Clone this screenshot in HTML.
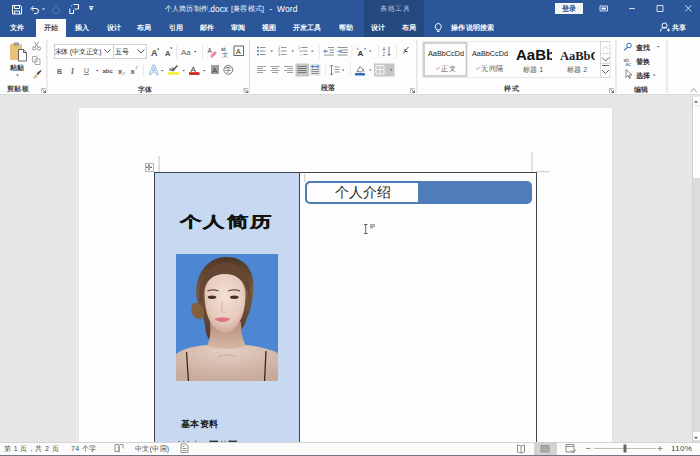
<!DOCTYPE html>
<html><head><meta charset="utf-8">
<style>
*{margin:0;padding:0;box-sizing:border-box}
html,body{width:700px;height:456px;overflow:hidden;background:#e6e6e6}
body{position:relative;font-family:"Liberation Sans",sans-serif;color:#444}
.a{position:absolute}
.t{position:absolute;white-space:nowrap;font-size:7px;letter-spacing:0.25px;line-height:8px;font-weight:bold;margin-top:0.8px}
.w{color:#fff}
.n{font-weight:normal}
svg{position:absolute;left:0;top:0}
</style></head><body>
<!-- title + tabs -->
<div class="a" style="left:0;top:0;width:700px;height:37px;background:#2b579a"></div>
<div class="a" style="left:364px;top:0;width:60px;height:37px;background:#24497f"></div>
<div class="a" style="left:36px;top:19px;width:30px;height:19px;background:#fdfdfd"></div>
<div class="t w n" style="left:164.5px;top:4.6px;font-size:7px;letter-spacing:0.25px">个人简历制作</div>
<div class="t w n" style="left:208px;top:4.2px;font-size:8.4px;letter-spacing:0">.docx</div>
<div class="t w n" style="left:231px;top:4.6px;font-size:7px;letter-spacing:0.2px">[兼容模式]</div>
<div class="t w n" style="left:269.5px;top:4.2px;font-size:8.3px">-</div>
<div class="t w n" style="left:277px;top:4.2px;font-size:8.4px;letter-spacing:0.2px">Word</div>
<div class="t" style="left:380px;top:4.6px;color:#b4c4dc;font-weight:normal;letter-spacing:0.5px">表格工具</div>
<div class="a" style="left:555px;top:3px;width:28px;height:11px;background:#f4f4f4"></div>
<div class="t" style="left:562px;top:4.6px;color:#2b579a">登录</div>
<div class="t w" style="left:10px;top:23.7px">文件</div>
<div class="t" style="left:44px;top:23.7px;color:#444">开始</div>
<div class="t w" style="left:74.5px;top:23.7px">插入</div>
<div class="t w" style="left:106.5px;top:23.7px">设计</div>
<div class="t w" style="left:137px;top:23.7px">布局</div>
<div class="t w" style="left:168.5px;top:23.7px">引用</div>
<div class="t w" style="left:200px;top:23.7px">邮件</div>
<div class="t w" style="left:231px;top:23.7px">审阅</div>
<div class="t w" style="left:262px;top:23.7px">视图</div>
<div class="t w" style="left:292.5px;top:23.7px">开发工具</div>
<div class="t w" style="left:339px;top:23.7px">帮助</div>
<div class="t w" style="left:371px;top:23.7px">设计</div>
<div class="t w" style="left:402px;top:23.7px">布局</div>
<div class="t w" style="left:451px;top:23.7px">操作说明搜索</div>
<div class="t w" style="left:672px;top:23.4px">共享</div>

<!-- ribbon -->
<div class="a" style="left:0;top:37px;width:700px;height:58px;background:#fdfdfd;border-bottom:1px solid #dadada"></div>


<!-- ribbon text -->
<div class="t" style="left:10px;top:63px;color:#333">粘贴</div>
<div class="t" style="left:7px;top:84.6px">剪贴板</div>
<div class="a" style="left:53.5px;top:44px;width:60px;height:14.5px;border:1px solid #cfcfcf;background:#fff"></div>
<div class="a" style="left:113px;top:44px;width:34px;height:14.5px;border:1px solid #cfcfcf;background:#fff"></div>
<div class="t" style="left:54.5px;top:47.7px;color:#222;width:48px;overflow:hidden;letter-spacing:-0.2px;font-weight:normal">宋体 (中文正文)</div>
<div class="t" style="left:115px;top:47.7px;color:#222;font-weight:normal">五号</div>
<div class="t" style="left:137.7px;top:84.9px">字体</div>
<div class="t" style="left:321px;top:83.7px">段落</div>
<div class="t" style="left:428px;top:49.5px;font-size:7.3px;letter-spacing:0;color:#222;font-weight:normal">AaBbCcDd</div>
<div class="t" style="left:441.4px;top:64.4px;font-weight:normal;color:#555">正文</div>
<div class="t" style="left:472px;top:49.5px;font-size:7.3px;letter-spacing:0;color:#222;font-weight:normal">AaBbCcDd</div>
<div class="t" style="left:481.4px;top:64.4px;font-weight:normal;color:#555">无间隔</div>
<div class="a" style="left:516px;top:44px;width:36px;height:18px;overflow:hidden"><div class="t" style="left:0;top:2px;font-size:15px;line-height:16px;font-weight:bold;letter-spacing:0;color:#111">AaBbCc</div></div>
<div class="t" style="left:522.6px;top:65.2px;font-weight:normal;color:#555">标题 1</div>
<div class="a" style="left:560px;top:46px;width:35px;height:16px;overflow:hidden"><div class="t" style="left:0;top:2px;font-family:'Liberation Serif',serif;font-size:12.5px;line-height:14px;font-weight:bold;letter-spacing:0;color:#1d1f2a">AaBbCc</div></div>
<div class="t" style="left:566.6px;top:65.2px;font-weight:normal;color:#555">标题 2</div>
<div class="t" style="left:504.4px;top:84.7px">样式</div>
<div class="t" style="left:635.6px;top:42.8px;color:#333">查找</div>
<div class="t" style="left:635.6px;top:57px;color:#333">替换</div>
<div class="t" style="left:635.6px;top:71.1px;color:#333">选择</div>
<div class="t" style="left:634px;top:85.2px">编辑</div>

<!-- doc area -->
<div class="a" style="left:78.5px;top:107.5px;width:533px;height:340px;background:#fdfdfd;box-shadow:0 0 1px #c4c4c4,-3px 0 2px -1px #ececec"></div>
<!-- scrollbar -->
<div class="a" style="left:692px;top:96.5px;width:8px;height:346px;background:#dcdcdc;border-left:1px solid #d0d0d0"></div>
<div class="a" style="left:692.5px;top:97px;width:7.5px;height:81px;background:#fdfdfd"></div>
<div class="a" style="left:692.5px;top:432px;width:7.5px;height:8px;background:#fdfdfd"></div>
<!-- table -->
<div class="a" style="left:154px;top:172px;width:145.5px;height:280px;background:#c6d9f0"></div>
<div class="a" style="left:154px;top:172px;width:383px;height:280px;border:1px solid #3f4550;border-bottom:none"></div>
<div class="a" style="left:299px;top:172px;width:1px;height:280px;background:#3f4550"></div>
<div class="a" style="left:144.5px;top:163px;width:9px;height:8.5px;border:1px solid #b4b4b4;background:#fdfdfd"></div>
<svg width="700" height="456" style="position:absolute;left:0;top:0">
<path d="M146.3 167.2h5.4M149 164.6v5.3" stroke="#444" stroke-width="0.6"/><path d="M146 167.2l1.2-1v2z M152 167.2l-1.2-1v2z M149 164.3l-1 1.2h2z M149 170.1l-1-1.2h2z" fill="#333"/>
<path d="M159.2 156v16M532 152v20M536.5 171.7h13M304.8 174v8" stroke="#bdbdbd" stroke-width="0.8"/>
<path d="M364 224.5h3.5M365.7 224.5v9M364 233.5h3.5" stroke="#555" stroke-width="0.9"/>
<path d="M370 224.8h5M370 226.3h5M370 227.8h3" stroke="#777" stroke-width="0.9"/>
</svg>
<!-- rounded header -->
<div class="a" style="left:305px;top:181.3px;width:227px;height:22.9px;border-radius:5px;background:#4e7db9"></div>
<div class="a" style="left:306.8px;top:183.2px;width:111.2px;height:19px;border-radius:3.5px 0 0 3.5px;background:#fdfdfd"></div>
<div class="a" style="left:335px;top:184px;font-size:13.5px;line-height:17px;color:#2a2a2a;white-space:nowrap">个人介绍</div>
<!-- title -->
<div class="a" style="left:180px;top:209.5px;font-size:22px;line-height:24px;letter-spacing:1.4px;font-weight:bold;color:#111;white-space:nowrap;font-family:'Liberation Serif',serif;transform:scaleY(0.7);transform-origin:50% 50%;-webkit-text-stroke:0.5px #111">个人简历</div>
<!-- photo -->
<div class="a" style="left:175.5px;top:253.5px;width:102px;height:127.5px;background:#4d87d3;overflow:hidden">
<svg width="102" height="128" viewBox="0 0 102 128" style="position:absolute;left:0;top:0">
<defs>
<radialGradient id="sk" cx="50%" cy="38%" r="62%"><stop offset="0" stop-color="#f3e0d6"/><stop offset="0.7" stop-color="#e8cbbd"/><stop offset="1" stop-color="#d2ab98"/></radialGradient>
<radialGradient id="sh" cx="50%" cy="15%" r="80%"><stop offset="0" stop-color="#e4cfc4"/><stop offset="1" stop-color="#c9aa9a"/></radialGradient>
<linearGradient id="hr" x1="0" y1="0" x2="0" y2="1"><stop offset="0" stop-color="#4e3526"/><stop offset="0.4" stop-color="#7a5a3e"/><stop offset="1" stop-color="#4f3828"/></linearGradient>
<linearGradient id="nk" x1="0" y1="0" x2="0" y2="1"><stop offset="0" stop-color="#b98f7a"/><stop offset="1" stop-color="#d6b8a8"/></linearGradient>
</defs>
<!-- hair mass -->
<path d="M21 46 C17 22 31 3 50 3 C69 3 80 16 77 40 C76 50 74 58 71 64 C69 70 67 74 64 77 L62 58 L37 58 C36 68 36 78 35 87 C32 85 29 79 29 71 L26 58 Z" fill="url(#hr)"/>
<ellipse cx="21.5" cy="57" rx="6" ry="8.5" transform="rotate(-20 21.5 57)" fill="#85603f"/>
<!-- neck -->
<path d="M34 68 C35 80 34 88 29 95 L72 95 C67 88 65 80 65 68Z" fill="url(#nk)"/>
<!-- shoulders -->
<path d="M0 100 C6 95 18 92 30 91 C40 96 60 96 71 91 C82 92 94 95 102 99 L102 128 L0 128Z" fill="url(#sh)"/>
<path d="M42 103 C47 100 55 100 60 103" stroke="#c4a190" stroke-width="0.8" fill="none"/>
<!-- straps -->
<path d="M10.5 98 L12.5 128" stroke="#3a2820" stroke-width="1.3"/>
<path d="M90 97 L88.5 128" stroke="#3a2820" stroke-width="1.3"/>
<!-- face -->
<path d="M28.5 38 C28.5 26 37 20 49 20 C61 20 69.5 27 69.5 40 C69.5 55 66 67 59 74 C55 77.5 52 78.5 48.5 78.5 C45 78.5 41.5 76.5 38 73 C31 66 28.5 52 28.5 38Z" fill="url(#sk)"/>
<!-- hair framing forehead -->
<path d="M23.5 48 C21 22 36 9 50 9 C64 9 77 20 74 48 C72 34 67 25 58 21 C52 18.5 44 18.5 38 22 C31 26 27 34 26.5 48Z" fill="#654632"/>
<!-- brows -->
<path d="M31.5 37 C35 35.5 39 35.5 42.5 37" stroke="#6b4c3c" stroke-width="1.2" fill="none"/>
<path d="M52 37 C56 35.5 60 35.5 64 37" stroke="#6b4c3c" stroke-width="1.2" fill="none"/>
<!-- eyes -->
<ellipse cx="36" cy="43.3" rx="4.3" ry="1.7" fill="#47312a"/>
<ellipse cx="58.3" cy="43.3" rx="4.3" ry="1.7" fill="#47312a"/>
<!-- nose -->
<path d="M46.5 47 L45.5 57.5 L49.5 58.5" stroke="#cfa995" stroke-width="0.7" fill="none"/>
<!-- lips -->
<path d="M38.5 64.8 C42.5 63 50.5 63 54.5 64.8 C51.5 69 41.5 69 38.5 64.8Z" fill="#dc7287"/>
</svg>
</div>
<div class="a" style="left:181px;top:418px;font-size:9px;letter-spacing:0.4px;line-height:12px;font-weight:bold;color:#111;white-space:nowrap">基本资料</div>
<svg width="700" height="456" style="position:absolute;left:0;top:0"><g fill="#333">
<rect x="209.5" y="440.6" width="8.5" height="1.4"/><rect x="228.5" y="440.6" width="8.5" height="1.4"/>
<rect x="178.5" y="440.8" width="1.2" height="1.2" opacity=".6"/><rect x="183" y="440.8" width="1.2" height="1.2" opacity=".6"/><rect x="187.5" y="440.8" width="1.2" height="1.2" opacity=".6"/><rect x="195" y="440.8" width="1.2" height="1.2" opacity=".6"/>
<rect x="221" y="440.8" width="1.2" height="1.2" opacity=".6"/><rect x="224.5" y="440.8" width="1.2" height="1.2" opacity=".6"/>
</g></svg>


<!-- status bar -->
<div class="a" style="left:0;top:441.5px;width:700px;height:14.5px;background:#fcfcfc;border-top:1px solid #d4d4d4;border-bottom:1.6px solid #6f7785"></div>

<div class="t" style="left:4px;top:444px;color:#444;font-weight:normal;letter-spacing:0.4px">第 1 页，共 2 页</div>
<div class="t" style="left:71px;top:444px;color:#444;font-weight:normal;letter-spacing:0.4px">74 个字</div>
<div class="t" style="left:135px;top:444px;color:#444;font-weight:normal;letter-spacing:0.3px">中文(中国)</div>
<div class="t" style="left:671px;top:444px;color:#444;font-weight:normal;font-size:8px;letter-spacing:0.3px">110%</div>
<div class="a" style="left:533.5px;top:442.5px;width:23.5px;height:12px;background:#d2d2d2"></div>
<svg width="700" height="456" style="position:absolute;left:0;top:0;z-index:4">
<g fill="none" stroke="#777" stroke-width="0.8">
 <path d="M115 444.5h4v7h-4z M119 446v6.5 M120 444.5h3v4"/>
 <path d="M181 444h5l2 2v6.5h-7z M182.5 446.5h2M182.5 448.5h4M182.5 450.5h4"/>
 <path d="M517.5 445l3.5 1 3.5-1v7l-3.5 1-3.5-1z M521 446v7"/>
 <path d="M566 444.5h8v7.5h-8z M566 446.5h8"/>
 <path d="M586 448.5h4.5 M657.5 448.5h5 M660 446v5"/>
</g>
<rect x="540.5" y="445" width="9" height="7.5" fill="#888" opacity="0.75"/>
<rect x="541.5" y="446" width="7" height="5.5" fill="#aaa"/>
<path d="M571 450.5l2 2 3-3" stroke="#555" stroke-width="0.8" fill="none"/>
<rect x="594" y="448" width="62" height="0.9" fill="#b8b8b8"/>
<rect x="623.5" y="444.5" width="3" height="8" fill="#666"/>
<path d="M694 437h4l-2 2z M694 102.5h4l-2-2z" fill="#555"/>
<rect x="693" y="105.5" width="7" height="0.7" fill="#dcdcdc"/>
</svg>
<svg width="700" height="456" viewBox="0 0 700 456" style="z-index:5">
<g fill="none" stroke="#fff" stroke-width="1">
 <!-- save -->
 <path d="M12.5 5.5h8l1 1v7.5h-9z"/>
 <path d="M14.5 5.5v3h5v-3"/>
 <path d="M14.5 14v-3h5v3"/>
 <!-- undo -->
 <path d="M32 8.5h4a2.5 2.5 0 0 1 0 5h-2"/>
 <path d="M33.5 6l-2.5 2.5 2.5 2.5"/>
 <!-- redo disabled -->
 <path d="M53.5 8a3.5 3.5 0 1 0 5 0" stroke="#5e80b5"/>
 <path d="M56 5v3.5" stroke="#5e80b5"/>
 <!-- touch mode -->
 <path d="M73.5 4.5h5v4.5h-4"/>
 <path d="M69.8 8.5v5h3.8v-3.5"/>
 <path d="M71 6.5l1.2-1" stroke-width="0.8"/>
 <!-- ribbon opts -->
 <path d="M600 6h7.5v5h-7.5z" stroke-width="0.8"/>
 <rect x="601.5" y="7.5" width="4.5" height="2" fill="#fff" stroke="none"/>
 <!-- minimize -->
 <path d="M629 8.5h6" stroke-width="0.8"/>
 <!-- maximize -->
 <path d="M657 5.5h6v6h-6z" stroke-width="0.8"/>
 <!-- close -->
 <path d="M685.3 5.3l6 6M691.3 5.3l-6 6" stroke-width="0.8"/>
 <!-- share person -->
 <circle cx="664.5" cy="25.5" r="2.5"/>
 <path d="M660.5 31.5a4 4 0 0 1 6.5-3.2M667 30h3M668.5 28.5v3"/>
 <!-- bulb -->
 <path d="M436 28.5a3 3 0 1 1 4.5 0l-0.8 1.5h-2.9z"/>
 <path d="M437 31.5h2.5"/>
</g>
<g fill="#fff">
 <path d="M42 8.5h3l-1.5 1.5z"/>
 <path d="M89 7.5h4.5l-2.25 3z"/><rect x="89" y="6" width="4.5" height="0.8"/>
</g>

<!-- clipboard group -->
<rect x="10" y="44" width="12" height="16" fill="#e6c177" rx="0.5"/>
<rect x="13.5" y="42.5" width="5.5" height="3" fill="#9a9a9a"/>
<path d="M18.5 49.5h5l3 3v8.5h-8z" fill="#fff" stroke="#444" stroke-width="0.8"/>
<path d="M23.5 49.5v3h3" fill="none" stroke="#444" stroke-width="0.8"/>
<path d="M16 74.5h3l-1.5 1.5z" fill="#555"/>
<g fill="none" stroke="#8a8a8a" stroke-width="0.9">
 <circle cx="34" cy="48.5" r="1.6"/><circle cx="39" cy="48.5" r="1.6"/>
 <path d="M34.8 47.2l4-5.5M38.2 47.2l-4-5.5"/>
 <path d="M32.5 56.5h4.5v5.5h-4.5z M35 59h5v5.5h-5z" stroke="#a0a0a0"/>
</g>
<path d="M33 77.5l3-3.5 2 2-3 3z" fill="#d9c49a"/>
<path d="M36.5 73.5l4-3.5 1 1-3.5 4z" fill="#444"/>
<path d="M41.5 92.8v-4.3h4.3" fill="none" stroke="#9a9a9a" stroke-width="0.7"/><path d="M42.5 89.5l3 3M45.5 90.3v2.2h-2.2" fill="none" stroke="#555" stroke-width="0.8"/>
<rect x="46.5" y="40" width="0.8" height="53" fill="#d2d2d2"/>

<!-- font group -->
<path d="M104.5 49.5l3 3 3-3" fill="none" stroke="#444" stroke-width="0.9"/>
<path d="M137.5 49.5l3.5 3.5 3.5-3.5" fill="none" stroke="#444" stroke-width="0.9"/>
<g font-family="Liberation Sans" fill="#444">
 <text x="57" y="73.5" font-size="7" font-weight="bold" fill="#666">B</text>
 <text x="71" y="73.5" font-size="7.5" font-style="italic" font-family="Liberation Serif" font-weight="bold" fill="#666">I</text>
 <text x="84" y="73" font-size="7" fill="#666">U</text>
 <text x="102.5" y="73" font-size="6" font-weight="bold" fill="#555">abc</text>
 <text x="118" y="73.5" font-size="7.5" font-weight="bold" fill="#555">x</text><text x="123" y="75" font-size="3.5" fill="#555">2</text>
 <text x="130.5" y="73.5" font-size="7.5" font-weight="bold" fill="#555">x</text><text x="135.5" y="68.5" font-size="3.5" fill="#555">2</text>
 <text x="151" y="55.5" font-size="9" font-weight="bold" fill="#505050">A</text>
 <text x="165" y="55.5" font-size="7.5" font-weight="bold" fill="#505050">A</text>
 <text x="181" y="54.5" font-size="8" fill="#606060">Aa</text>
</g>
<path d="M84 74.5h5" stroke="#666" stroke-width="0.8"/>
<path d="M157 49.5l1.3-1.5 1.3 1.5z M170 47.5h2.6l-1.3 1.5z" fill="#444"/>
<path d="M96 70h2.5l-1.25 1.5z M194 51h2.5l-1.25 1.5z M161 70h2.5l-1.25 1.5z M182.5 70h2.5l-1.25 1.5z M203 70h2.5l-1.25 1.5z" fill="#555"/>
<rect x="176" y="45" width="0.8" height="14" fill="#e4e4e4"/>
<rect x="202" y="45" width="0.8" height="14" fill="#e4e4e4"/>
<rect x="143" y="63" width="0.8" height="13" fill="#e4e4e4"/>
<!-- clear formatting -->
<text x="207.5" y="53" font-size="6.5" fill="#444" font-family="Liberation Sans">A</text>
<path d="M210 56l5-5 2 2-5 5z" fill="#e98aa0"/>
<!-- phonetic -->
<text x="221" y="51" font-size="4.5" fill="#333" font-family="Liberation Sans">ab</text>
<text x="222" y="57" font-size="6" fill="#2f5f9a" font-family="Liberation Sans">文</text>
<!-- char border -->
<rect x="234" y="46" width="9.5" height="9.5" fill="none" stroke="#555" stroke-width="0.9"/>
<text x="235.8" y="54.3" font-size="7.5" fill="#333" font-family="Liberation Sans">A</text>
<!-- row2 -->
<path d="M149.3 74.5L152.9 65h1.8l3.6 9.5h-2l-0.9-2.5h-3.2l-0.9 2.5z M152.4 70.6h2.8l-1.4-3.8z" fill="#fff" stroke="#6d9fd8" stroke-width="0.7" stroke-linejoin="round"/>
<text x="169" y="70.5" font-size="5.5" fill="#444" font-family="Liberation Sans">ab</text>
<path d="M172 71l5.5-5.5" stroke="#444" stroke-width="1.3"/>
<rect x="168" y="72.2" width="11" height="2.5" fill="#f5f02a"/>
<text x="190.5" y="71.5" font-size="8" fill="#333" font-family="Liberation Sans">A</text>
<rect x="189" y="72.2" width="10.5" height="2.7" fill="#d42020"/>
<rect x="211" y="65" width="8" height="9" fill="#9e9e9e"/>
<text x="212" y="73" font-size="8" fill="#444" font-family="Liberation Sans">A</text>
<circle cx="228.3" cy="69.8" r="4.4" fill="none" stroke="#555" stroke-width="0.8"/>
<text x="225.3" y="72.3" font-size="5.5" fill="#444" font-family="Liberation Sans">字</text>
<path d="M243.8 92.8v-4.3h4.3" fill="none" stroke="#9a9a9a" stroke-width="0.7"/><path d="M244.8 89.5l3 3M247.8 90.3v2.2h-2.2" fill="none" stroke="#555" stroke-width="0.8"/>
<rect x="249.2" y="40" width="0.8" height="53" fill="#d2d2d2"/>
</svg>

<svg width="700" height="456" viewBox="0 0 700 456" style="z-index:6">
<!-- paragraph group -->
<g fill="#2f6db5">
 <circle cx="258" cy="47.5" r="0.9"/><circle cx="258" cy="51" r="0.9"/><circle cx="258" cy="54.5" r="0.9"/>
</g>
<g stroke="#777" stroke-width="0.8" fill="none">
 <path d="M260 47.5h5.5M260 51h5.5M260 54.5h5.5"/>
 <path d="M281 47.5h5.5M281 51h5.5M281 54.5h5.5"/>
 <path d="M301 47.5h6.5M302.5 51h5M303.5 54.5h4"/>
 <path d="M328 47.5h6M329.5 50h4.5M329.5 52.5h4.5M324 55h10"/>
 <path d="M337.5 47.5h10M341.5 50h6.5M341.5 52.5h6.5M337.5 55h10"/>
</g>
<g fill="#2f6db5" font-family="Liberation Sans" font-size="3.6">
 <text x="278" y="48.8">1</text><text x="278" y="52.3">2</text><text x="278" y="55.8">3</text>
 <text x="298" y="48.8">1</text><text x="299.5" y="52.3">a</text><text x="300.5" y="55.8">i</text>
</g>
<path d="M270.5 50.5h2.5l-1.25 1.5z M291.5 50.5h2.5l-1.25 1.5z M311 50.5h2.5l-1.25 1.5z M369 50.5h2.5l-1.25 1.5z" fill="#555"/>
<path d="M324 51.2h4M325.5 49.5l-1.7 1.7 1.7 1.7" stroke="#2f6db5" stroke-width="0.9" fill="none"/>
<path d="M337.5 51.2h4M339.8 49.5l1.7 1.7-1.7 1.7" stroke="#2f6db5" stroke-width="0.9" fill="none"/>
<rect x="319" y="45" width="0.8" height="13" fill="#e4e4e4"/>
<rect x="351.5" y="45" width="0.8" height="13" fill="#e4e4e4"/>
<rect x="378" y="45" width="0.8" height="13" fill="#e4e4e4"/>
<rect x="396.2" y="45" width="0.8" height="13" fill="#e4e4e4"/>
<!-- chinese layout -->
<text x="357.5" y="55.5" font-size="8" fill="#333" font-family="Liberation Sans" font-weight="bold">A</text>
<path d="M356.5 48l2 1.5M366 48l-2 1.5" stroke="#2f6db5" stroke-width="0.9"/>
<!-- sort -->
<text x="382.5" y="50.5" font-size="4.5" fill="#555" font-family="Liberation Sans">A</text>
<text x="382.5" y="56" font-size="4.5" fill="#8a5fb5" font-family="Liberation Sans">Z</text>
<path d="M389 46.5v9M387.5 54l1.5 1.5 1.5-1.5" stroke="#555" stroke-width="0.8" fill="none"/>
<!-- show hide -->
<path d="M408.5 47l-4 4M405 49l0 2.5 2.5 0M405 51.5l-1.5 2" stroke="#333" stroke-width="0.9" fill="none"/>
<!-- row 2 align -->
<g stroke="#8a8a8a" stroke-width="0.8" fill="none">
 <path d="M257 66.5h9M257 68.5h6M257 70.5h9M257 72.5h6"/>
 <path d="M270.5 66.5h9M272 68.5h6M270.5 70.5h9M272 72.5h6"/>
 <path d="M284 66.5h9M287 68.5h6M284 70.5h9M287 72.5h6"/>
</g>
<rect x="295.5" y="63.5" width="13.5" height="13" fill="#c6c6c6"/>
<path d="M297.5 66.5h9M297.5 68.5h9M297.5 70.5h9M297.5 72.5h9" stroke="#666" stroke-width="0.8"/>
<rect x="310" y="64" width="10.5" height="11.5" fill="#dde3ea"/>
<path d="M311.5 69.5h7.5M311.5 71.5h7.5M311.5 73.5h7.5" stroke="#777" stroke-width="0.8"/>
<path d="M311.5 66.5h7.5M313 65.2l-1.5 1.3 1.5 1.3M317.5 65.2l1.5 1.3-1.5 1.3" stroke="#2f6db5" stroke-width="0.8" fill="none"/>
<rect x="325.4" y="63" width="0.8" height="13" fill="#e4e4e4"/>
<rect x="350.2" y="63" width="0.8" height="13" fill="#e4e4e4"/>
<!-- line spacing -->
<path d="M331.5 65v10M330 66.5l1.5-1.5 1.5 1.5M330 73.5l1.5 1.5 1.5-1.5" stroke="#2f6db5" stroke-width="0.8" fill="none"/>
<path d="M334.5 67h5M334.5 69.5h5M334.5 72h5" stroke="#777" stroke-width="0.8"/>
<path d="M342 69.5h2.5l-1.25 1.5z M369 69.5h2.5l-1.25 1.5z" fill="#555"/>
<!-- shading -->
<path d="M357 71.5l3-5 3.5 3.5-2 2z" fill="#fff" stroke="#444" stroke-width="0.7"/>
<path d="M362.5 69l1.5 2.5" stroke="#d6452e" stroke-width="1"/>
<rect x="355" y="73" width="10" height="2.5" fill="#2f6db5"/>
<!-- borders -->
<rect x="374" y="63.5" width="20.5" height="13" fill="#c6c6c6"/>
<path d="M376 65.5h8v8.5h-8z M380 65.5v8.5 M376 69.7h8" stroke="#fff" stroke-width="0.9" fill="none"/>
<path d="M390 69.5h2.5l-1.25 1.5z" fill="#555"/>
<path d="M410.5 92.8v-4.3h4.3" fill="none" stroke="#9a9a9a" stroke-width="0.7"/><path d="M411.5 89.5l3 3M414.5 90.3v2.2h-2.2" fill="none" stroke="#555" stroke-width="0.8"/>
<rect x="416.5" y="40" width="0.8" height="53" fill="#d2d2d2"/>

<!-- styles gallery -->
<path d="M422.5 41.5h178v36h-178z" fill="none" stroke="#e3e3e3" stroke-width="0.8"/>
<rect x="424" y="43" width="42.5" height="33" fill="none" stroke="#c6c6c6" stroke-width="1.6"/>
<path d="M436 68.5l1.5 1 2-2.5" fill="none" stroke="#777" stroke-width="0.6"/>
<path d="M476 68.5l1.5 1 2-2.5" fill="none" stroke="#777" stroke-width="0.6"/>
<rect x="600.5" y="41.5" width="9.5" height="36" fill="#fdfdfd" stroke="#cfcfcf" stroke-width="0.8"/>
<path d="M600.5 53.5h9.5M600.5 63.5h9.5" stroke="#cfcfcf" stroke-width="0.8"/>
<path d="M602.5 49.5l3-3 3 3" fill="none" stroke="#ccc" stroke-width="0.8"/>
<path d="M602 57.5l3.5 3.5 3.5-3.5" fill="none" stroke="#555" stroke-width="0.9"/>
<path d="M602 65.5h7M602 70l3.5 3.5 3.5-3.5" fill="none" stroke="#555" stroke-width="0.9"/>
<path d="M609.5 92.8v-4.3h4.3" fill="none" stroke="#9a9a9a" stroke-width="0.7"/><path d="M610.5 89.5l3 3M613.5 90.3v2.2h-2.2" fill="none" stroke="#555" stroke-width="0.8"/>
<rect x="615.5" y="40" width="0.8" height="53" fill="#d2d2d2"/>

<!-- editing -->
<circle cx="629" cy="45.5" r="2.3" fill="none" stroke="#2f6db5" stroke-width="1"/>
<path d="M627.3 47.3l-3 3" stroke="#2f6db5" stroke-width="1.2"/>
<path d="M657 46h2.5l-1.25 1.5z M653 74.5h2.5l-1.25 1.5z" fill="#555"/>
<text x="623.5" y="61.5" font-size="5" fill="#555" font-family="Liberation Sans">ab</text>
<text x="625.5" y="65.5" font-size="5" fill="#2f6db5" font-family="Liberation Sans">ac</text>
<path d="M626 69.5v8l2-2 1.5 3 1-0.5-1.5-3h3z" fill="#fff" stroke="#555" stroke-width="0.7"/>
<rect x="666.5" y="40" width="0.8" height="53" fill="#d2d2d2"/>
<path d="M690.5 92l3.2-3 3.2 3" fill="none" stroke="#777" stroke-width="0.8"/>
</svg>
</body></html>
